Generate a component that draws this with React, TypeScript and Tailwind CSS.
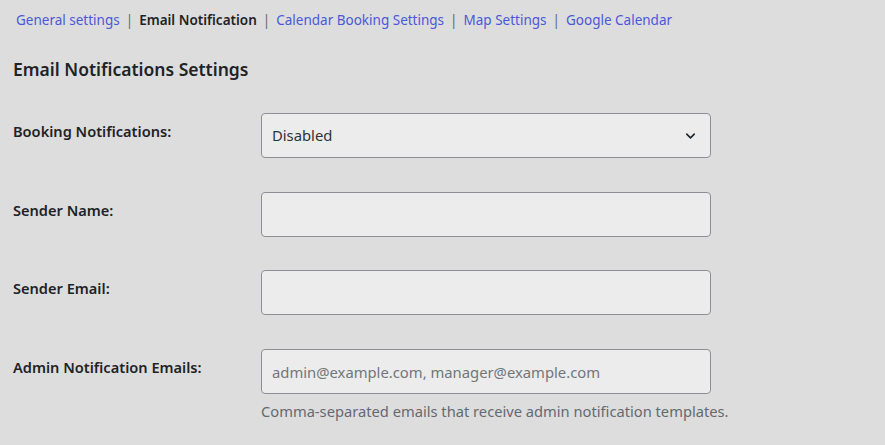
import { ChevronDown } from 'lucide-react';

const tabs = [
  { label: 'General settings', active: false },
  { label: 'Email Notification', active: true },
  { label: 'Calendar Booking Settings', active: false },
  { label: 'Map Settings', active: false },
  { label: 'Google Calendar', active: false },
];

const font = { fontFamily: '"Noto Sans", "Open Sans", sans-serif' };

const Field = ({ placeholder }: { placeholder?: string }) => (
  <input
    type="text"
    placeholder={placeholder}
    className="w-[450px] h-[45px] rounded-[4px] border border-[#8c8f94] bg-[#ececec] px-[10px] text-[14.8px] text-[#2c3338] placeholder:text-[#72767b] outline-none"
  />
);

const Row = ({ label, children }: { label: string; children: React.ReactNode }) => (
  <div className="flex pt-[15px] pb-[18.7px]">
    <div className="w-[248px] shrink-0 pt-[8px] text-[14.6px] leading-[20px] font-semibold text-[#1d2327]">{label}</div>
    <div>{children}</div>
  </div>
);

export default function App() {
  return (
    <div className="min-h-screen bg-[#dddddd] pl-[13px]" style={font}>
      {/* Tabs */}
      <div className="flex items-center pt-[10px] pl-[3px] text-[13.5px] leading-[20px]">
        {tabs.map((t, i) => (
          <span key={t.label} className="flex items-center">
            {i > 0 && <span className="mx-[6px] text-[#646970]">|</span>}
            <span className={t.active ? 'font-semibold text-[#1d2327]' : 'text-[#4b57d9]'}>{t.label}</span>
          </span>
        ))}
      </div>

      {/* Heading */}
      <h2 className="mt-[27px] text-[17.5px] leading-[24px] font-semibold text-[#1d2327]">Email Notifications Settings</h2>

      {/* Form */}
      <div className="mt-[17px]">
        <Row label="Booking Notifications:">
          <div className="relative w-[450px] h-[45px] rounded-[4px] border border-[#8c8f94] bg-[#ececec] flex items-center pl-[10px] text-[14.8px] text-[#2c3338]">
            Disabled
            <ChevronDown className="absolute right-[12px] top-1/2 -translate-y-1/2 w-[15px] h-[15px] text-[#1d2327]" strokeWidth={2.5} />
          </div>
        </Row>
        <Row label="Sender Name:">
          <Field />
        </Row>
        <Row label="Sender Email:">
          <Field />
        </Row>
        <Row label="Admin Notification Emails:">
          <Field placeholder="admin@example.com, manager@example.com" />
          <p className="mt-[7px] text-[14.7px] leading-[20px] text-[#646970]">Comma-separated emails that receive admin notification templates.</p>
        </Row>
      </div>
    </div>
  );
}
